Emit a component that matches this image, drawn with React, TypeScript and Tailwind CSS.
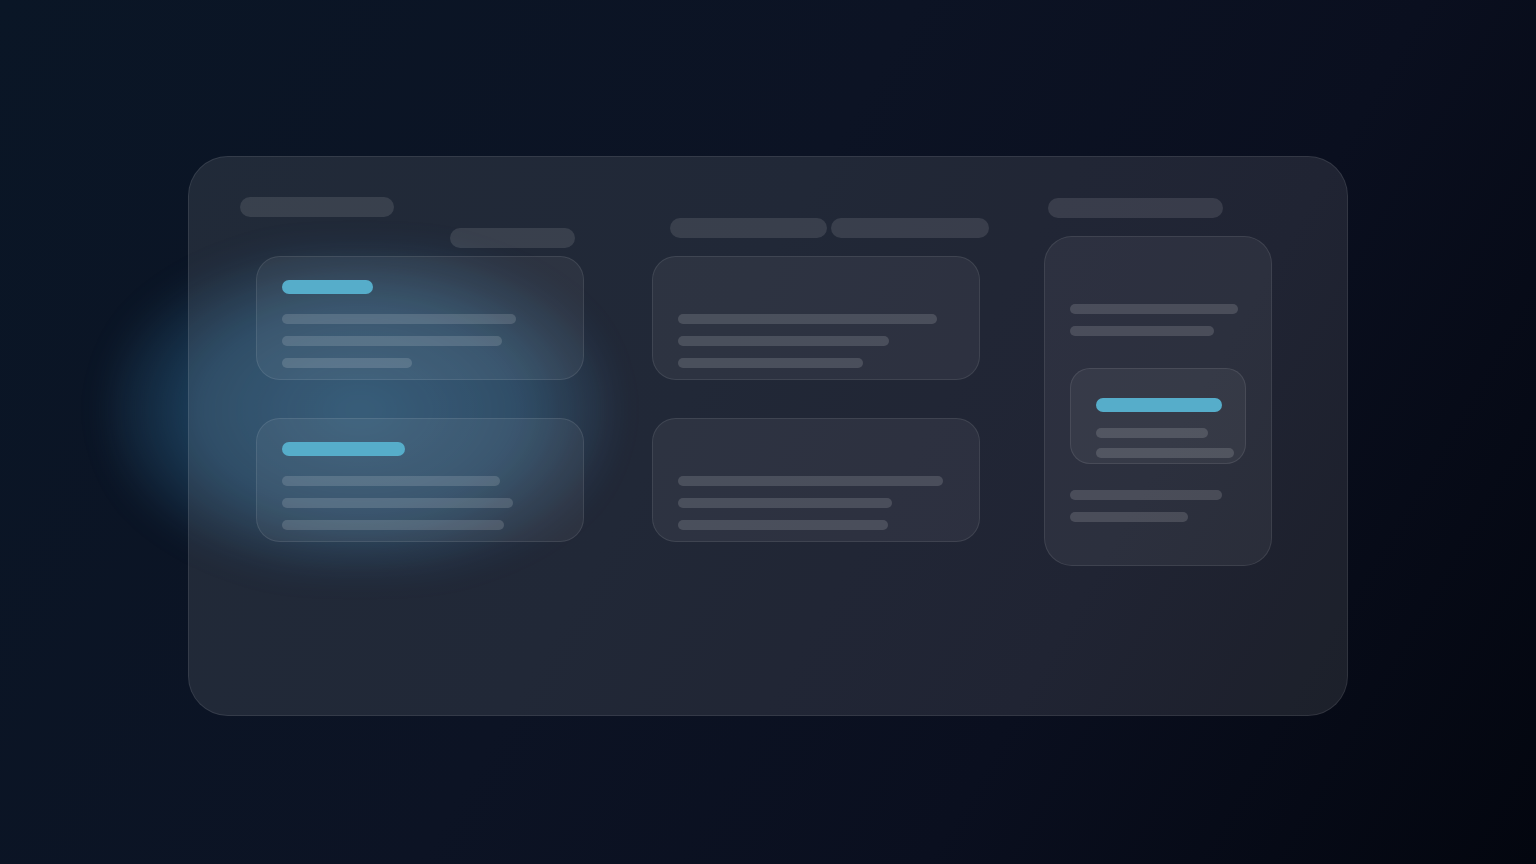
import React from 'react';

type LineProps = { w: number; accent?: boolean; className?: string };

const Line: React.FC<LineProps> = ({ w, accent, className = '' }) => (
    <div
        className={`rounded-full ${accent ? 'h-[14px] bg-[#56adca]' : 'h-[10px] bg-white/[0.14]'} ${className}`}
        style={{ width: w }}
    />
);

const Pill: React.FC<{ w: number; className?: string }> = ({ w, className = '' }) => (
    <div className={`h-5 rounded-full bg-white/[0.11] ${className}`} style={{ width: w }} />
);

const Card: React.FC<{ accent?: number; lines: number[] }> = ({ accent, lines }) => (
    <div className="h-[124px] w-[328px] rounded-[24px] border border-white/[0.09] bg-white/[0.055] pl-[25px] pt-[23px]">
        {accent ? <Line w={accent} accent /> : <div className="h-[14px]" />}
        <div className="mt-5 flex flex-col gap-3">
            {lines.map((w, i) => (
                <Line key={i} w={w} />
            ))}
        </div>
    </div>
);

const App: React.FC = () => {
    return (
        <div className="relative h-[864px] w-full overflow-hidden bg-[linear-gradient(120deg,#0a1626_0%,#0c1324_45%,#0a0f1f_70%,#03060f_100%)] pt-[156px]">
            {/* blue glow behind the board */}
            <div className="absolute left-[105px] top-[245px] h-[330px] w-[510px] rounded-full bg-[radial-gradient(ellipse_at_center,rgba(70,150,200,0.45)_0%,rgba(60,140,190,0.34)_45%,rgba(50,120,170,0)_75%)] blur-[14px]" />

            <div className="relative mx-auto h-[560px] w-[1160px] rounded-[40px] border border-white/[0.09] bg-white/[0.09] pl-[51px] pt-[40px]">
                <div className="flex items-start">
                    {/* left column */}
                    <div className="flex w-[344px] flex-col">
                        <Pill w={154} />
                        <Pill w={125} className="ml-[210px] mt-[11px]" />
                        <div className="ml-4 mt-2 flex flex-col gap-[38px]">
                            <Card accent={91} lines={[234, 220, 130]} />
                            <Card accent={123} lines={[218, 231, 222]} />
                        </div>
                    </div>

                    {/* middle column */}
                    <div className="ml-[68px] mt-[21px] flex w-[337px] flex-col">
                        <div className="ml-[18px] flex gap-1">
                            <Pill w={157} />
                            <Pill w={158} />
                        </div>
                        <div className="mt-[18px] flex flex-col gap-[38px]">
                            <Card lines={[259, 211, 185]} />
                            <Card lines={[265, 214, 210]} />
                        </div>
                    </div>

                    {/* right column */}
                    <div className="ml-[55px] mt-px flex flex-col">
                        <Pill w={175} className="ml-1" />
                        <div className="mt-[18px] h-[330px] w-[228px] rounded-[28px] border border-white/[0.09] bg-white/[0.055] pl-[25px] pt-[67px]">
                            <div className="flex flex-col gap-3">
                                <Line w={168} />
                                <Line w={144} />
                            </div>
                            <div className="mt-8 h-[96px] w-[176px] rounded-[20px] border border-white/[0.09] bg-white/[0.05] pl-[25px] pt-[29px]">
                                <Line w={126} accent />
                                <Line w={112} className="mt-4" />
                                <Line w={138} className="mt-[10px]" />
                            </div>
                            <div className="mt-[26px] flex flex-col gap-3">
                                <Line w={152} />
                                <Line w={118} />
                            </div>
                        </div>
                    </div>
                </div>
            </div>
        </div>
    );
};

export default App;
